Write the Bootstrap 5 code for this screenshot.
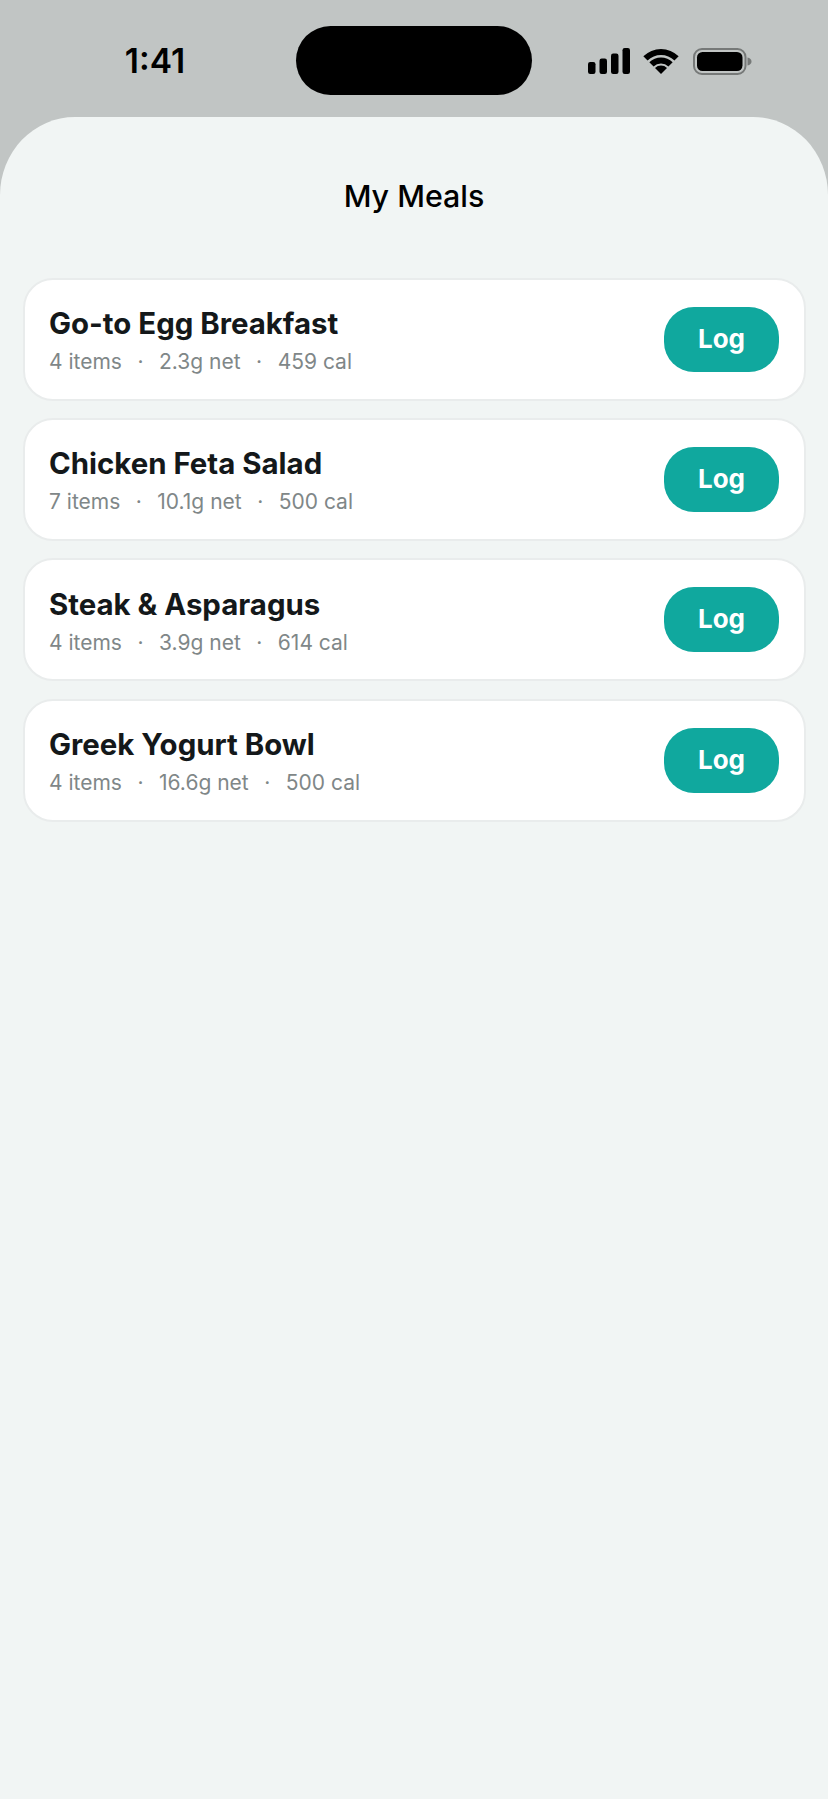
<!DOCTYPE html>
<html lang="en">
<head>
  <meta charset="UTF-8" />
  <meta name="viewport" content="width=device-width, initial-scale=1.0"/>
  <title>My Meals</title>
  <link href="https://cdn.jsdelivr.net/npm/bootstrap@5.3.3/dist/css/bootstrap.min.css" rel="stylesheet">
  <style>
    html, body { height: 100%; }
    body { background: #c1c5c4; font-family: Inter, "Liberation Sans", sans-serif; overflow: hidden; }
    .status-row { height: 116.5px; padding-top: 26px; }
    .status-time { width: 296px; height: 69px; font-size: 33.5px; font-weight: 600; color: #000; padding-left: 14px; padding-top: 1px; }
    .island { width: 236px; height: 69px; background: #000; border-radius: 35px; }
    .status-icons { height: 69px; padding-left: 56px; padding-top: 1px; }
    .sig-wifi { margin-left: 13px; }
    .sig-batt { margin-left: 14px; }
    .sheet { background: #f1f5f4; border-radius: 75px 75px 0 0 / 78px 78px 0 0; height: 1683px; padding: 0 22.5px; }
    .sheet-title { font-size: 30.4px; font-weight: 550; color: #000; line-height: 40px; padding-top: 59.5px; margin-bottom: 61.5px; }
    .meal-list { gap: 17.4px; }
    .meal-card { height: 123px; border: 2px solid #e9ecec; border-radius: 30px; padding: 0 24.5px; }
    .meal-text { padding-top: 3px; }
    .meal-name { font-size: 29.4px; font-weight: 700; color: #14181a; line-height: 36px; margin: 0 0 7px; }
    .meal-info { font-size: 21px; color: #7f8788; line-height: 26px; }
    .meal-info .dot { margin: 0 15.5px; }
    .log-btn { width: 115px; height: 65px; background: #10a89e; border: 0; border-radius: 30px; color: #fff; font-size: 26px; font-weight: 700; padding: 0 0 2px; }
  </style>
</head>
<body>
  <div class="d-flex status-row">
    <div class="status-time d-flex align-items-center justify-content-center">1:41</div>
    <div class="island"></div>
    <div class="status-icons d-flex align-items-center">
      <svg width="42" height="26" viewBox="0 0 42 26" fill="#000">
        <rect x="0" y="14" width="7.5" height="12" rx="2.2"/>
        <rect x="11.5" y="10.5" width="7.5" height="15.5" rx="2.2"/>
        <rect x="23" y="5.5" width="7.5" height="20.5" rx="2.2"/>
        <rect x="34.5" y="0" width="7.5" height="26" rx="2.2"/>
      </svg>
      <svg class="sig-wifi" width="36" height="26" viewBox="0 0 36 26" fill="#000">
        <path d="M.32 8.32A25 25 0 0 1 35.68 8.32L31.44 12.56A19 19 0 0 0 4.56 12.56Z"/>
        <path d="M6.33 14.33A16.5 16.5 0 0 1 29.67 14.33L25.42 18.58A10.5 10.5 0 0 0 10.58 18.58Z"/>
        <path d="M12 20L18 26L24 20A8.5 8.5 0 0 0 12 20Z"/>
      </svg>
      <svg class="sig-batt" width="59" height="27" viewBox="0 0 59 27">
        <rect x="1" y="1" width="51.5" height="25" rx="8" fill="none" stroke="#767978" stroke-width="2"/>
        <rect x="4" y="4" width="45.5" height="19" rx="5.5" fill="#000"/>
        <path d="M54.5 9.5C57 10 58.5 11.5 58.5 13.5C58.5 15.5 57 17 54.5 17.5Z" fill="#767978"/>
      </svg>
    </div>
  </div>

  <main class="sheet">
    <h1 class="sheet-title text-center">My Meals</h1>
    <div class="meal-list d-flex flex-column">
      <div class="card meal-card flex-row align-items-center justify-content-between">
        <div class="meal-text">
          <h2 class="meal-name">Go-to Egg Breakfast</h2>
          <div class="meal-info">4 items<span class="dot">·</span>2.3g net<span class="dot">·</span>459 cal</div>
        </div>
        <button type="button" class="btn log-btn">Log</button>
      </div>
      <div class="card meal-card flex-row align-items-center justify-content-between">
        <div class="meal-text">
          <h2 class="meal-name">Chicken Feta Salad</h2>
          <div class="meal-info">7 items<span class="dot">·</span>10.1g net<span class="dot">·</span>500 cal</div>
        </div>
        <button type="button" class="btn log-btn">Log</button>
      </div>
      <div class="card meal-card flex-row align-items-center justify-content-between">
        <div class="meal-text">
          <h2 class="meal-name">Steak &amp; Asparagus</h2>
          <div class="meal-info">4 items<span class="dot">·</span>3.9g net<span class="dot">·</span>614 cal</div>
        </div>
        <button type="button" class="btn log-btn">Log</button>
      </div>
      <div class="card meal-card flex-row align-items-center justify-content-between">
        <div class="meal-text">
          <h2 class="meal-name">Greek Yogurt Bowl</h2>
          <div class="meal-info">4 items<span class="dot">·</span>16.6g net<span class="dot">·</span>500 cal</div>
        </div>
        <button type="button" class="btn log-btn">Log</button>
      </div>
    </div>
  </main>

  <script src="https://cdn.jsdelivr.net/npm/bootstrap@5.3.3/dist/js/bootstrap.bundle.min.js"></script>
</body>
</html>
